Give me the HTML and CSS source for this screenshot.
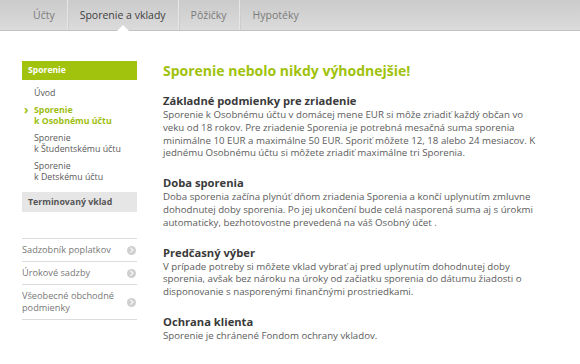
FILE: index.html
```html
<!DOCTYPE html>
<html lang="sk">
<head>
    <meta charset="UTF-8">
    <title>Sporenie a vklady</title>
    <link rel="stylesheet" href="styles.css">
</head>
<body>
    <header class="topbar">
        <nav class="main-nav">
            <a class="nav-item">Účty</a>
            <a class="nav-item active">Sporenie a vklady</a>
            <a class="nav-item">Pôžičky</a>
            <a class="nav-item">Hypotéky</a>
        </nav>
    </header>

    <div class="page">
        <aside class="sidebar">
            <div class="side-title">Sporenie</div>
            <ul class="side-menu">
                <li>Úvod</li>
                <li class="current">Sporenie<br>k Osobnému účtu</li>
                <li>Sporenie<br>k Študentskému účtu</li>
                <li>Sporenie<br>k Detskému účtu</li>
            </ul>
            <div class="side-box">Terminovaný vklad</div>

            <ul class="side-links">
                <li><span>Sadzobník poplatkov</span><i class="arrow"></i></li>
                <li><span>Úrokové sadzby</span><i class="arrow"></i></li>
                <li><span>Všeobecné obchodné<br>podmienky</span><i class="arrow"></i></li>
            </ul>
        </aside>

        <main class="content">
            <h1>Sporenie nebolo nikdy výhodnejšie!</h1>

            <h2>Základné podmienky pre zriadenie</h2>
            <p>Sporenie k Osobnému účtu v domácej mene EUR si môže zriadiť každý občan vo<br>
            veku od 18 rokov. Pre zriadenie Sporenia je potrebná mesačná suma sporenia<br>
            minimálne 10 EUR a maximálne 50 EUR. Sporiť môžete 12, 18 alebo 24 mesiacov. K<br>
            jednému Osobnému účtu si môžete zriadiť maximálne tri Sporenia.</p>

            <h2>Doba sporenia</h2>
            <p>Doba sporenia začína plynúť dňom zriadenia Sporenia a končí uplynutím zmluvne<br>
            dohodnutej doby sporenia. Po jej ukončení bude celá nasporená suma aj s úrokmi<br>
            automaticky, bezhotovostne prevedená na váš Osobný účet .</p>

            <h2>Predčasný výber</h2>
            <p>V prípade potreby si môžete vklad vybrať aj pred uplynutím dohodnutej doby<br>
            sporenia, avšak bez nároku na úroky od začiatku sporenia do dátumu žiadosti o<br>
            disponovanie s nasporenými finančnými prostriedkami.</p>

            <h2>Ochrana klienta</h2>
            <p>Sporenie je chránené Fondom ochrany vkladov.</p>
        </main>
    </div>
</body>
</html>
```

FILE: styles.css
```css
body {
    margin: 0;
    padding: 0;
    background: #fff;
    font-family: "Open Sans", "DejaVu Sans", sans-serif;
    color: #555;
}

.topbar {
    height: 31px;
    background: linear-gradient(#cbcbcb, #dbdbdb);
    border-bottom: 1px solid #c2c2c2;
    box-sizing: border-box;
}

.main-nav {
    display: flex;
    height: 100%;
    padding-left: 21px;
}

.nav-item {
    position: relative;
    display: flex;
    align-items: center;
    padding: 0 12px;
    font-size: 10.5px;
    color: #7a7a7a;
    border-right: 1px solid #e6e6e6;
    box-shadow: 1px 0 0 #cdcdcd inset;
}

.nav-item:first-child {
    box-shadow: none;
}

.nav-item:last-child {
    border-right: none;
    padding-left: 13px;
}

.nav-item.active {
    color: #3f3f3f;
}

.nav-item.active::after {
    content: "";
    position: absolute;
    left: 50%;
    bottom: -1px;
    margin-left: -6px;
    border-left: 6px solid transparent;
    border-right: 6px solid transparent;
    border-bottom: 6px solid #fff;
}

.page {
    display: flex;
    padding: 30px 0 0 22px;
}

.sidebar {
    width: 115px;
    flex-shrink: 0;
    font-size: 8.8px;
}

.side-title {
    background: #a2c30e;
    color: #fff;
    font-weight: bold;
    padding: 5px 6px 5px;
    font-size: 8.6px;
    line-height: 9px;
}

.side-menu {
    list-style: none;
    margin: 0;
    padding: 8px 0 9px 12px;
}

.side-menu li {
    color: #5a5a5a;
    line-height: 11px;
    margin-bottom: 6px;
}

.side-menu li:last-child {
    margin-bottom: 0;
}

.side-menu li.current {
    color: #9cbe10;
    font-weight: bold;
    position: relative;
}

.side-menu li.current::before {
    content: "›";
    position: absolute;
    left: -10px;
    top: -1px;
    font-size: 12px;
    font-weight: bold;
}

.side-box {
    background: #e6e6e6;
    color: #555;
    font-weight: bold;
    padding: 6px 6px 5px;
    line-height: 9px;
    font-size: 8.8px;
}

.side-links {
    list-style: none;
    margin: 26px 0 0;
    padding: 0;
    border-top: 1px solid #dcdcdc;
}

.side-links li {
    display: flex;
    align-items: center;
    justify-content: space-between;
    border-bottom: 1px solid #dcdcdc;
    padding: 5px 0;
    color: #777;
    font-size: 9.2px;
    line-height: 12px;
}

.arrow {
    width: 9px;
    height: 9px;
    border-radius: 50%;
    background: #cfcfcf;
    position: relative;
    margin-right: 1px;
}

.arrow::after {
    content: "";
    position: absolute;
    left: 2px;
    top: 2.5px;
    width: 2.5px;
    height: 2.5px;
    border-top: 1px solid #fff;
    border-right: 1px solid #fff;
    transform: rotate(45deg);
}

.content {
    margin-left: 26px;
    width: 410px;
}

.content h1 {
    margin: 0 0 13px;
    color: #a0c20c;
    font-size: 14px;
    line-height: 20px;
    font-weight: bold;
}

.content h2 {
    margin: 0 0 1px;
    color: #3a3a3a;
    font-size: 11.2px;
    line-height: 14px;
    font-weight: bold;
}

.content p {
    margin: 0 0 16px;
    font-size: 9.7px;
    line-height: 12.8px;
    color: #5c5c5c;
}
```
